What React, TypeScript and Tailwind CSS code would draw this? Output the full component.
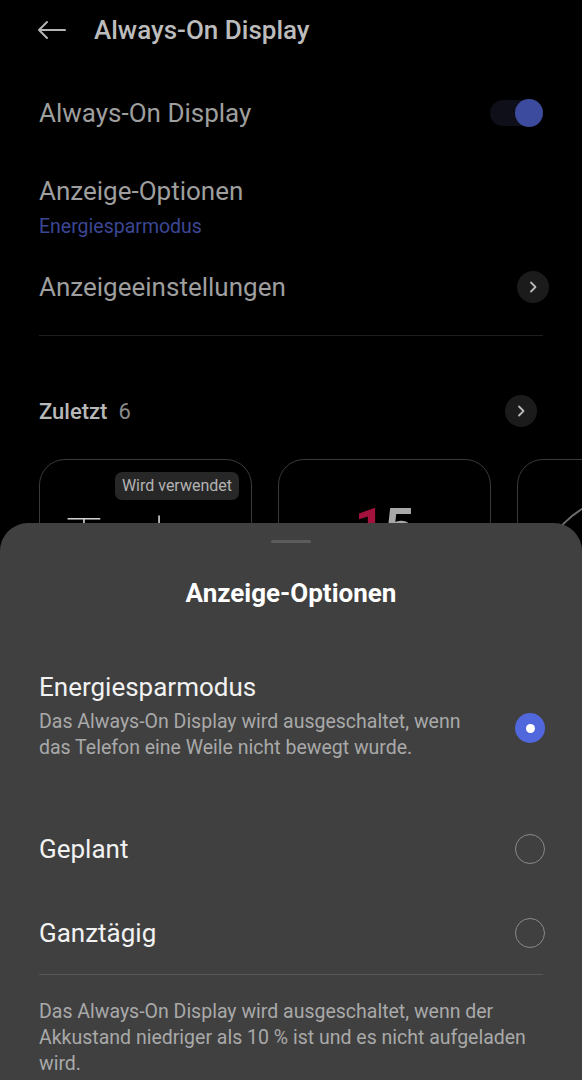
import React from "react";

const Chevron = ({ className }: { className: string }) => (
  <div className={"flex h-8 w-8 items-center justify-center rounded-full bg-[#1b1b1b] " + className}>
    <svg width="14" height="14" viewBox="0 0 14 14" fill="none">
      <path d="M5 2.5 L9.5 7 L5 11.5" stroke="#b9b9b9" strokeWidth="1.8" strokeLinecap="round" strokeLinejoin="round" />
    </svg>
  </div>
);

const Radio = ({ checked, className = "" }: { checked?: boolean; className?: string }) =>
  checked ? (
    <div className={"flex h-[30px] w-[30px] shrink-0 items-center justify-center rounded-full bg-[#5168dc] " + className}>
      <div className="h-[9px] w-[9px] rounded-full bg-white" />
    </div>
  ) : (
    <div className={"h-[30px] w-[30px] shrink-0 rounded-full border-[1.5px] border-[#8a8a8a] " + className} />
  );

export default function App() {
  return (
    <div
      className="relative h-[1080px] w-[582px] overflow-hidden bg-black"
      style={{ fontFamily: "Roboto, 'Noto Sans', sans-serif" }}
    >
      {/* page behind the sheet */}
      <div className="flex h-[60px] items-center pl-[37px]">
        <svg width="30" height="20" viewBox="0 0 30 20" fill="none">
          <path d="M28 10 H2 M10 2 L2 10 L10 18" stroke="#b5b5b5" strokeWidth="2" strokeLinecap="round" strokeLinejoin="round" />
        </svg>
        <span className="ml-[27px] text-[26px] font-medium text-[#bcbcbc]">Always-On Display</span>
      </div>

      <div className="flex h-[106px] items-center justify-between px-[39px]">
        <span className="text-[26px] text-[#9e9e9e]">Always-On Display</span>
        <div className="relative h-[26px] w-[53px] rounded-full bg-[#0e0f19]">
          <div className="absolute right-0 top-[-1px] h-[28px] w-[28px] rounded-full bg-[#3d4b9e]" />
        </div>
      </div>

      <div className="flex flex-col px-[39px] pt-[9px]">
        <span className="text-[26px] leading-[32px] text-[#9e9e9e]">Anzeige-Optionen</span>
        <span className="mt-[8px] text-[19.5px] leading-[24px] text-[#3b4795]">Energiesparmodus</span>
      </div>

      <div className="flex h-[96px] items-center justify-between pl-[39px] pr-[33px]">
        <span className="text-[26px] text-[#9e9e9e]">Anzeigeeinstellungen</span>
        <Chevron className="" />
      </div>
      <div className="mx-[39px] h-px bg-[#1d1d1d]" />

      <div className="mt-[59px] flex h-[32px] items-center justify-between pl-[39px] pr-[45px]">
        <div className="flex items-baseline gap-[11px]">
          <span className="text-[22px] font-medium text-[#b8b8b8]">Zuletzt</span>
          <span className="text-[22px] text-[#8a8a8a]">6</span>
        </div>
        <Chevron className="" />
      </div>

      <div className="mt-[32px] flex gap-[26px] pl-[39px]">
        <div className="relative h-[260px] w-[213px] shrink-0 overflow-hidden rounded-[26px] border border-[#3a3a3a]">
          <div className="absolute right-[12px] top-[12px] rounded-[7px] bg-[#272727] px-[7px] py-[3px] text-[16px] leading-[22px] text-[#b3b3b3]">
            Wird verwendet
          </div>
          <div className="absolute left-[26px] top-[50px] text-[60px] font-thin leading-none text-[#d0d0d0]">
            Tod
          </div>
        </div>
        <div className="relative h-[260px] w-[213px] shrink-0 overflow-hidden rounded-[26px] border border-[#3a3a3a]">
          <div className="mt-[42px] text-center text-[52px] font-bold leading-none">
            <span className="text-[#a3123c]">1</span>
            <span className="text-[#a8a8a8]">5</span>
          </div>
        </div>
        <div className="relative h-[260px] w-[213px] shrink-0 overflow-hidden rounded-[26px] border border-[#3a3a3a]">
          <div className="absolute left-[13px] top-[31px] h-[218px] w-[218px] rounded-full border-2 border-[#6e6e6e]" />
        </div>
      </div>

      {/* bottom sheet */}
      <div className="absolute inset-x-0 bottom-0 top-[523px] flex flex-col rounded-t-[28px] bg-[#404040]">
        <div className="mx-auto mt-[17px] h-[3px] w-[40px] rounded-full bg-[#5c5c5c]" />
        <div className="mt-[34px] text-center text-[26px] font-bold leading-[32px] text-white">Anzeige-Optionen</div>

        <div className="mt-[62px] flex items-start justify-between pl-[39px] pr-[37px]">
          <div className="flex flex-col">
            <span className="text-[26px] leading-[32px] text-[#f2f2f2]">Energiesparmodus</span>
            <span className="mt-[6px] whitespace-nowrap text-[19.5px] leading-[26px] text-[#a9a9a9]">
              Das Always-On Display wird ausgeschaltet, wenn
              <br />
              das Telefon eine Weile nicht bewegt wurde.
            </span>
          </div>
          <Radio checked className="mt-[42px]" />
        </div>

        <div className="mt-[72px] flex h-[32px] items-center justify-between pl-[39px] pr-[37px]">
          <span className="text-[26px] text-[#f2f2f2]">Geplant</span>
          <Radio />
        </div>

        <div className="mt-[52px] flex h-[32px] items-center justify-between pl-[39px] pr-[37px]">
          <span className="text-[26px] text-[#f2f2f2]">Ganztägig</span>
          <Radio />
        </div>

        <div className="mx-[39px] mt-[25px] h-px bg-[#575757]" />

        <p className="mt-[24px] whitespace-nowrap px-[39px] text-[19.5px] leading-[26px] text-[#a9a9a9]">
          Das Always-On Display wird ausgeschaltet, wenn der
          <br />
          Akkustand niedriger als 10 % ist und es nicht aufgeladen
          <br />
          wird.
        </p>
      </div>
    </div>
  );
}
